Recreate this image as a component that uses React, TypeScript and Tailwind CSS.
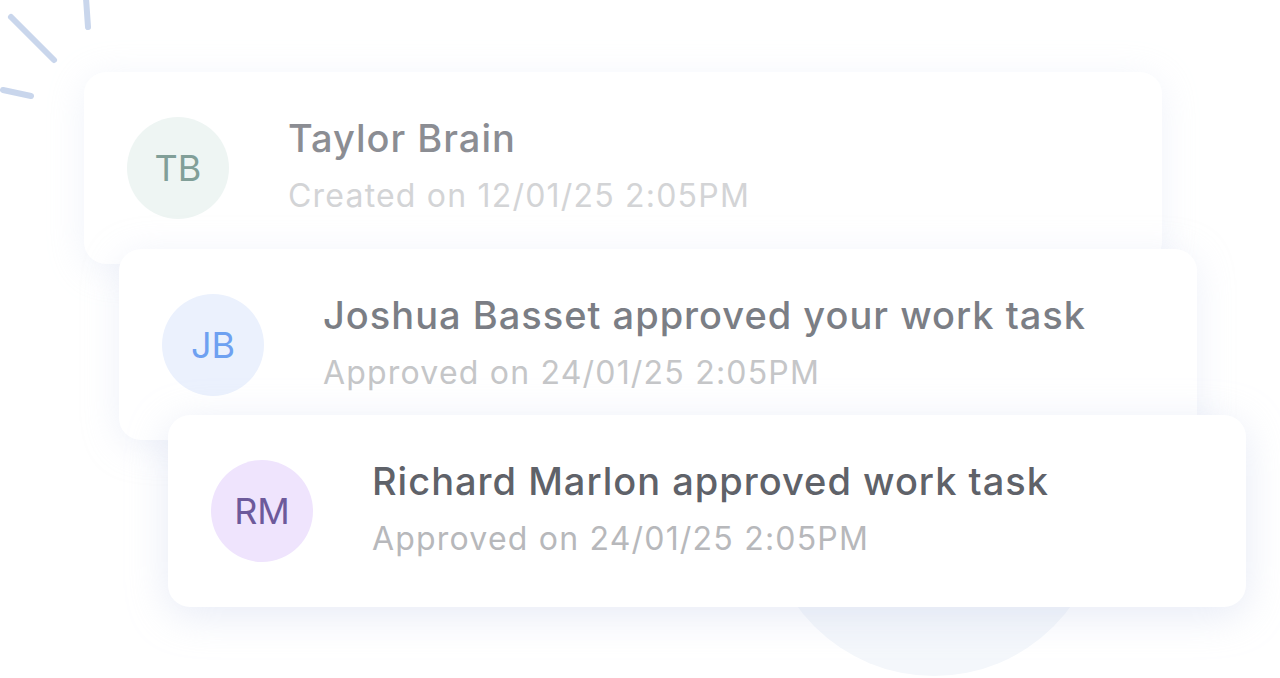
import React from "react";

type Item = {
  initials: string;
  title: string;
  sub: string;
  avatar: string;
  titleCls: string;
  subCls: string;
};

function Card({ item, cls }: { item: Item; cls: string }) {
  return (
    <div className={cls}>
      <div className={item.avatar}>{item.initials}</div>
      <div className="ml-[59px] flex flex-col pb-[5px]">
        <div className={item.titleCls}>{item.title}</div>
        <div className={item.subCls}>{item.sub}</div>
      </div>
    </div>
  );
}

export default function App() {
  const items: Item[] = [
    {
      initials: "TB",
      title: "Taylor Brain",
      sub: "Created on 12/01/25 2:05PM",
      avatar:
        "w-[102px] h-[102px] shrink-0 rounded-full bg-[#eef5f3] flex items-center justify-center text-[36px] text-[#819f98]",
      titleCls: "text-[38px] leading-[46px] font-medium tracking-[1px] text-[#8b8d93]",
      subCls: "text-[32px] leading-[40px] tracking-[1.2px] text-[#d3d4d6] mt-[15px]",
    },
    {
      initials: "JB",
      title: "Joshua Basset approved your work task",
      sub: "Approved on 24/01/25 2:05PM",
      avatar:
        "w-[102px] h-[102px] shrink-0 rounded-full bg-[#ebf1fd] flex items-center justify-center text-[36px] text-[#6ea1f1]",
      titleCls: "text-[38px] leading-[46px] font-medium tracking-[1px] text-[#7b7e85]",
      subCls: "text-[32px] leading-[40px] tracking-[1.2px] text-[#c5c6c8] mt-[15px]",
    },
    {
      initials: "RM",
      title: "Richard Marlon approved work task",
      sub: "Approved on 24/01/25 2:05PM",
      avatar:
        "w-[102px] h-[102px] shrink-0 rounded-full bg-[#efe4fd] flex items-center justify-center text-[36px] text-[#6d5a9b]",
      titleCls: "text-[38px] leading-[46px] font-medium tracking-[1px] text-[#5f6269]",
      subCls: "text-[32px] leading-[40px] tracking-[1.2px] text-[#b7b8bb] mt-[15px]",
    },
  ];

  return (
    <div
      className="relative w-[1280px] h-[678px] overflow-hidden bg-white"
      style={{ fontFamily: "Inter, 'Noto Sans', sans-serif" }}
    >
      {/* decorative circle */}
      <div className="absolute left-[765px] top-[338px] w-[338px] h-[338px] rounded-full bg-[#f4f7fb]" />
      {/* decorative strokes */}
      <svg className="absolute left-0 top-0" width="120" height="110" viewBox="0 0 120 110">
        <g stroke="#c9d6ec" strokeWidth="6" strokeLinecap="round" fill="none">
          <line x1="11" y1="17" x2="54" y2="60" />
          <line x1="86" y1="-2" x2="88" y2="27" />
          <line x1="3" y1="90" x2="31" y2="96" />
        </g>
      </svg>

      <div className="relative flex flex-col pt-[72px]">
        <Card
          item={items[0]}
          cls="ml-[84px] w-[1078px] h-[192px] rounded-[22px] bg-white shadow-[0_6px_36px_rgba(205,214,238,0.3)] flex items-center pl-[43px]"
        />
        <Card
          item={items[1]}
          cls="ml-[119px] mt-[-15px] w-[1078px] h-[191px] rounded-[22px] bg-white shadow-[0_6px_36px_rgba(205,214,238,0.35)] flex items-center pl-[43px]"
        />
        <Card
          item={items[2]}
          cls="ml-[168px] mt-[-25px] w-[1078px] h-[192px] rounded-[22px] bg-white shadow-[0_8px_40px_rgba(195,205,232,0.4)] flex items-center pl-[43px]"
        />
      </div>
    </div>
  );
}
